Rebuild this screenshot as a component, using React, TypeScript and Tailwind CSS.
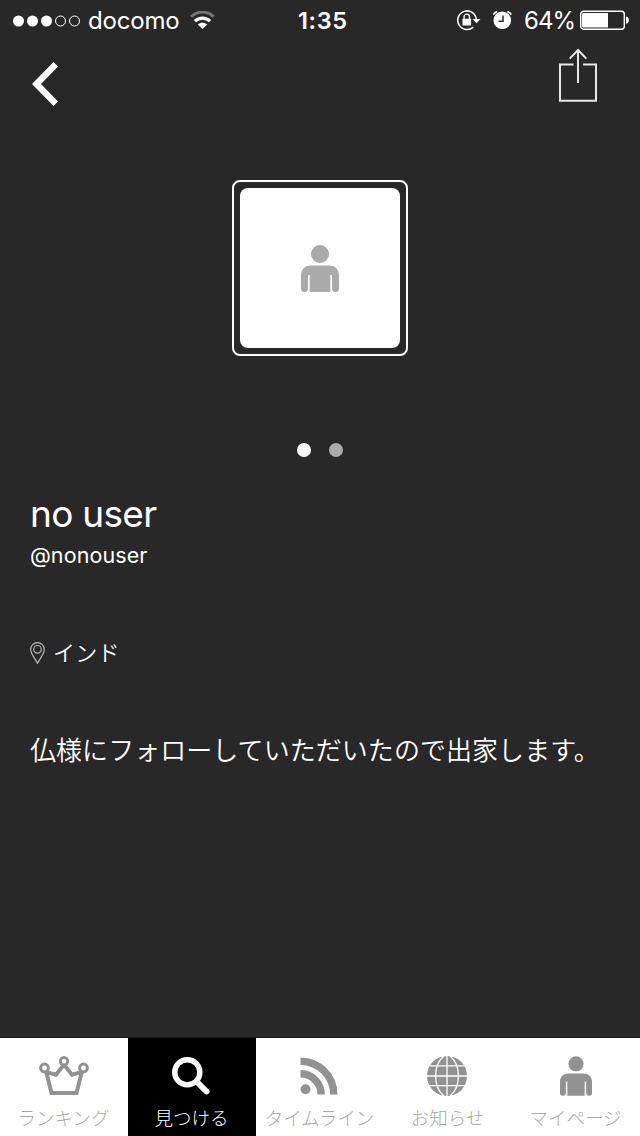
import type { ReactNode } from "react";
import clsx from "clsx";

function StatusBar() {
  return (
    <div className="flex h-10 items-center text-white">
      <svg className="ml-[13px] mt-px shrink-0" width="68" height="12" viewBox="0 0 68 12" fill="none">
        <circle cx="5.5" cy="6" r="5.5" fill="#fff" />
        <circle cx="19.5" cy="6" r="5.5" fill="#fff" />
        <circle cx="33.5" cy="6" r="5.5" fill="#fff" />
        <circle cx="47.5" cy="6" r="5" stroke="#fff" />
        <circle cx="61.5" cy="6" r="5" stroke="#fff" />
      </svg>
      <span className="ml-[7px] w-[93px] shrink-0 whitespace-nowrap pt-0.5 text-[24px] leading-10 tracking-[-0.2px]">docomo</span>
      <svg className="ml-[9px] shrink-0" width="25" height="18" viewBox="0 0 25 18" fill="none">
        <path d="M1.2 5.8C7.5 -0.6 17.5 -0.6 23.8 5.8" stroke="#767676" strokeWidth="3" />
        <path d="M4.9 10.200C9.2 6 15.8 6 20.1 10.200" stroke="#fff" strokeWidth="3.200" />
        <path d="M12.5 18L7.8 13.6C10.4 11 14.6 11 17.2 13.6Z" fill="#fff" />
      </svg>
      <span className="ml-[83px] w-[52px] shrink-0 whitespace-nowrap pt-0.5 text-[23.5px] font-semibold leading-10 tracking-[0.6px]">1:35</span>
      <svg className="ml-[107px] shrink-0" width="24" height="22" viewBox="0 0 24 22" fill="none">
        <path d="M16.300 18.1A9.3 9.3 0 1 1 19.300 10.3" stroke="#fff" strokeWidth="1.5" />
        <path d="M15.500 10H23.500L19.500 14.2Z" fill="#fff" />
        <rect x="5.500" y="9.8" width="8.6" height="6.6" rx="0.5" fill="#fff" />
        <path d="M7.100 10V7.8A2.7 2.7 0 0 1 12.500 7.8V10" stroke="#fff" strokeWidth="1.4" />
      </svg>
      <svg className="ml-[11px] shrink-0" width="20" height="20" viewBox="0 0 20 20" fill="none">
        <circle cx="10.300" cy="10.3" r="8.8" fill="#fff" />
        <path d="M1.300 4.700A6 6 0 0 1 5.2 1.6M19.300 4.700A6 6 0 0 0 15.400 1.6" stroke="#fff" strokeWidth="1.600" />
        <path d="M11 5.6V11.2H6.5" stroke="#282828" strokeWidth="1.5" />
      </svg>
      <span className="ml-3 w-[52px] shrink-0 whitespace-nowrap pt-0.5 text-[24px] leading-10 tracking-[-1px]">64%</span>
      <svg className="ml-1 shrink-0" width="50" height="20" viewBox="0 0 50 20" fill="none">
        <rect x="0.7" y="1.2" width="43.6" height="18" rx="3" stroke="#fff" strokeWidth="1.4" />
        <path d="M3.5 3H28V17.5H3.5A1.5 1.5 0 0 1 2 16V4.5A1.5 1.5 0 0 1 3.5 3Z" fill="#fff" />
        <path d="M46 6.6A3.7 3.7 0 0 1 46 13.8Z" fill="#fff" />
      </svg>
    </div>
  );
}

function NavBar() {
  return (
    <header className="flex h-20 items-start justify-between pl-8 pr-[42px] pt-2">
      <button aria-label="Back" className="mt-[14px]">
        <svg width="27" height="44" viewBox="0 0 27 44" fill="#fff">
          <path d="M21.500 0L26 4.500L9 22L26 39.500L21.500 44L0 22Z" />
        </svg>
      </button>
      <button aria-label="Share">
        <svg width="40" height="54" viewBox="0 0 40 54" fill="none" stroke="#e6e6e6" strokeWidth="2">
          <path d="M15.5 16.5H2V52.7H38V16.5H25" />
          <path d="M20 35V2M11.7 10.6L20 2L28.3 10.6" />
        </svg>
      </button>
    </header>
  );
}

function PersonIcon({ className }: { className?: string }) {
  return (
    <svg className={className} viewBox="0 0 38 47" fill="currentColor">
      <circle cx="19" cy="9" r="9" />
      <path d="M10 20.5H28C34 20.5 38 24.5 38 30.5V43.5A3.5 3.5 0 0 1 31 43.5V30H29.3V47H8.7V30H7V43.5A3.5 3.5 0 0 1 0 43.5V30.5C0 24.5 4 20.5 10 20.5Z" />
    </svg>
  );
}

function CrownIcon() {
  return (
    <svg width="50" height="40" viewBox="0 0 50 40" fill="none" stroke="currentColor">
      <path d="M7.2 16L12.5 37H37.5L42.8 16L33 18.7L25 8.5L17 18.7Z" strokeWidth="4" />
      <circle cx="5.5" cy="12" r="3.9" fill="#fff" strokeWidth="3" />
      <circle cx="25" cy="5.2" r="3.7" fill="#fff" strokeWidth="3" />
      <circle cx="44.5" cy="12" r="3.9" fill="#fff" strokeWidth="3" />
    </svg>
  );
}

function SearchIcon() {
  return (
    <svg className="mr-0.5" width="38" height="38" viewBox="0 0 38 38" fill="none" stroke="currentColor">
      <circle cx="15.3" cy="15.3" r="12.6" strokeWidth="5.4" />
      <path d="M24.5 24.5L34.5 34.5" strokeWidth="6" strokeLinecap="round" />
    </svg>
  );
}

function FeedIcon() {
  return (
    <svg className="mr-0.5" width="38" height="38" viewBox="0 0 38 38" fill="none" stroke="currentColor" strokeWidth="7.4">
      <path d="M0.5 4.2A33.3 33.3 0 0 1 33.8 37.5" />
      <path d="M0.5 16.8A20.7 20.7 0 0 1 21.2 37.5" />
      <circle cx="5.5" cy="32.3" r="5" fill="currentColor" stroke="none" />
    </svg>
  );
}

function GlobeIcon() {
  return (
    <svg className="mr-0.5" width="40" height="40" viewBox="0 0 40 40" fill="none" stroke="#fff" strokeWidth="1.3">
      <circle cx="20" cy="20" r="20" fill="currentColor" stroke="none" />
      <path d="M20 0V40M0 20H40M0 9.8H40M0 29.7H40" />
      <path d="M17 0C5.8 9 5.8 31 17 40M23 0C34.2 9 34.2 31 23 40" />
    </svg>
  );
}

const tabs: { label: string; icon: ReactNode; active?: boolean }[] = [
  { label: "ランキング", icon: <CrownIcon /> },
  { label: "見つける", icon: <SearchIcon />, active: true },
  { label: "タイムライン", icon: <FeedIcon /> },
  { label: "お知らせ", icon: <GlobeIcon /> },
  { label: "マイページ", icon: <PersonIcon className="h-10 w-8" /> },
];

function TabBar() {
  return (
    <nav className="grid h-[99px] grid-cols-5 border-t border-[#181818] bg-white">
      {tabs.map((tab) => (
        <button
          key={tab.label}
          className={clsx(
            "flex flex-col items-center pt-[17px]",
            tab.active ? "bg-black text-white" : "text-[#929292]"
          )}
        >
          <span className="flex h-[41px] items-center">{tab.icon}</span>
          <span
            className={clsx(
              "mt-[9px] whitespace-nowrap pr-px text-[18.5px] font-light leading-[26px]",
              tab.active ? "text-white" : "text-[#aaaaaa]"
            )}
          >
            {tab.label}
          </span>
        </button>
      ))}
    </nav>
  );
}

export default function App() {
  return (
    <div className="flex h-[1136px] w-[640px] flex-col overflow-hidden bg-[#282828] font-['Inter','Noto_Sans_CJK_JP',sans-serif] text-white">
      <StatusBar />
      <NavBar />

      <main className="flex flex-1 flex-col">
        <div className="mx-auto mt-[60px] size-[176px] rounded-lg border-2 border-white p-1.5">
          <div className="flex size-full items-center justify-center rounded-lg bg-white text-[#aaaaaa]">
            <PersonIcon className="h-[47px] w-[38px]" />
          </div>
        </div>

        {/* Page indicator */}
        <div className="mt-[87px] flex justify-center gap-[18px]">
          <span className="size-3.5 rounded-full bg-white" />
          <span className="size-3.5 rounded-full bg-[#aaaaaa]" />
        </div>

        <div className="px-[30px] pt-[33px]">
          <h1 className="h-12 text-[37px] leading-12 tracking-[-0.7px]">no user</h1>
          <p className="mt-px h-8 text-[21.5px] leading-8 tracking-[0.1px]">@nonouser</p>
          <div className="mt-[66px] flex h-8 items-center">
            <svg width="15" height="22" viewBox="0 0 15 22" fill="none" stroke="#b8b8b8" strokeWidth="1.2">
              <path d="M7.5 21.2C5.5 16.7 0.7 12.2 0.7 7.5A6.8 6.8 0 0 1 14.3 7.5C14.3 12.2 9.5 16.7 7.5 21.2Z" />
              <circle cx="7.5" cy="7.3" r="3.8" />
            </svg>
            <span className="ml-2 text-[22px] font-[350] leading-8 tracking-[0.3px]">インド</span>
          </div>
          <p className="mt-[62px] h-10 whitespace-nowrap text-[26px] font-[350] leading-10 tracking-[0.05px]">
            仏様にフォローしていただいたので出家します。
          </p>
        </div>
      </main>

      <TabBar />
    </div>
  );
}
